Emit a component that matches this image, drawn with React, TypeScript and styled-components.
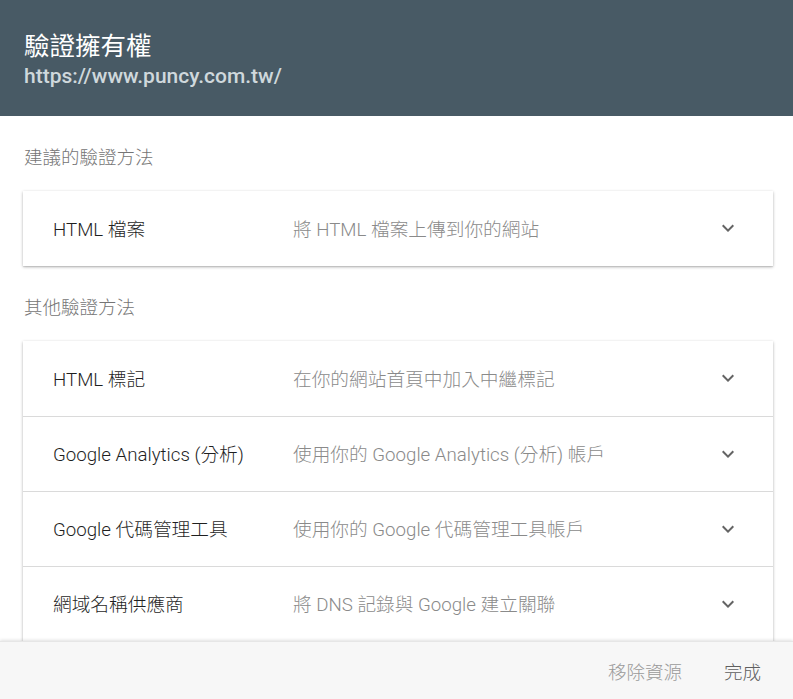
import React from "react";
import styled, { createGlobalStyle } from "styled-components";

const Global = createGlobalStyle`
  html, body { margin: 0; padding: 0; background: #fff; }
  body { font-family: Roboto, "Noto Sans CJK TC", "Liberation Sans", sans-serif; }
`;

const Dialog = styled.div`
  width: 793px;
  height: 699px;
  display: flex;
  flex-direction: column;
  background: #fff;
  overflow: hidden;
`;

const Header = styled.header`
  background: #485a65;
  height: 116px;
  box-sizing: border-box;
  padding: 28px 24px 0;
  flex-shrink: 0;
`;

const Title = styled.h1`
  margin: 0;
  font-size: 25.5px;
  line-height: 32px;
  font-weight: 400;
  color: #ffffff;
  font-family: "Noto Sans CJK TC", sans-serif;
`;

const Url = styled.div`
  margin-top: 3px;
  font-family: Roboto, "Liberation Sans", sans-serif;
  font-weight: 500;
  font-size: 21px;
  line-height: 26px;
  color: #cfd8dc;
`;

const Body = styled.main`
  flex: 1;
  overflow: hidden;
  padding: 0 20px 0 23px;
`;

const SectionLabel = styled.div`
  padding-top: 30px;
  margin-bottom: 21px;
  padding-left: 1px;
  font-size: 18.5px;
  line-height: 24px;
  color: #757575;
  font-weight: 300;
`;

const Card = styled.div`
  background: #fff;
  box-shadow: 0 1px 3px rgba(0, 0, 0, 0.28), 0 1px 1px rgba(0, 0, 0, 0.08);
`;

const Row = styled.div`
  height: 75px;
  display: flex;
  align-items: center;
  padding: 0 33px 3px 30px;
  box-sizing: border-box;
  & + & {
    border-top: 1px solid #dadada;
  }
`;

const RowTitle = styled.div`
  width: 240px;
  flex-shrink: 0;
  font-size: 18.7px;
  color: #1f1f1f;
  font-weight: 300;
`;

const RowDesc = styled.div`
  flex: 1;
  font-size: 18.7px;
  color: #8a8a8a;
  font-weight: 300;
`;

const Chevron = styled.svg`
  width: 24px;
  height: 24px;
  margin-top: 2px;
  fill: #646464;
  flex-shrink: 0;
`;

const Footer = styled.footer`
  height: 58px;
  flex-shrink: 0;
  background: #f7f7f7;
  box-shadow: 0 -1px 3px rgba(0, 0, 0, 0.12);
  border-top: 1px solid #e6e6e6;
  display: flex;
  justify-content: flex-end;
  align-items: center;
  padding-right: 32px;
  gap: 42px;
  position: relative;
  z-index: 1;
  box-sizing: border-box;
`;

const FooterButton = styled.span<{ $primary?: boolean }>`
  font-size: 18.5px;
  font-weight: 300;
  color: ${(p) => (p.$primary ? "#5f5f5f" : "#9a9a9a")};
`;

const ExpandIcon = () => (
  <Chevron viewBox="0 0 24 24">
    <path d="M16.59 8.59L12 13.17 7.41 8.59 6 10l6 6 6-6z" />
  </Chevron>
);

const suggested = [{ title: "HTML 檔案", desc: "將 HTML 檔案上傳到你的網站" }];
const others = [
  { title: "HTML 標記", desc: "在你的網站首頁中加入中繼標記" },
  { title: "Google Analytics (分析)", desc: "使用你的 Google Analytics (分析) 帳戶" },
  { title: "Google 代碼管理工具", desc: "使用你的 Google 代碼管理工具帳戶" },
  { title: "網域名稱供應商", desc: "將 DNS 記錄與 Google 建立關聯" },
];

const Methods = ({ items }: { items: { title: string; desc: string }[] }) => (
  <Card>
    {items.map((m) => (
      <Row key={m.title}>
        <RowTitle>{m.title}</RowTitle>
        <RowDesc>{m.desc}</RowDesc>
        <ExpandIcon />
      </Row>
    ))}
  </Card>
);

export default function App() {
  return (
    <>
      <Global />
      <Dialog>
        <Header>
          <Title>驗證擁有權</Title>
          <Url>https://www.puncy.com.tw/</Url>
        </Header>
        <Body>
          <SectionLabel>建議的驗證方法</SectionLabel>
          <Methods items={suggested} />
          <SectionLabel>其他驗證方法</SectionLabel>
          <Methods items={others} />
        </Body>
        <Footer>
          <FooterButton>移除資源</FooterButton>
          <FooterButton $primary>完成</FooterButton>
        </Footer>
      </Dialog>
    </>
  );
}
